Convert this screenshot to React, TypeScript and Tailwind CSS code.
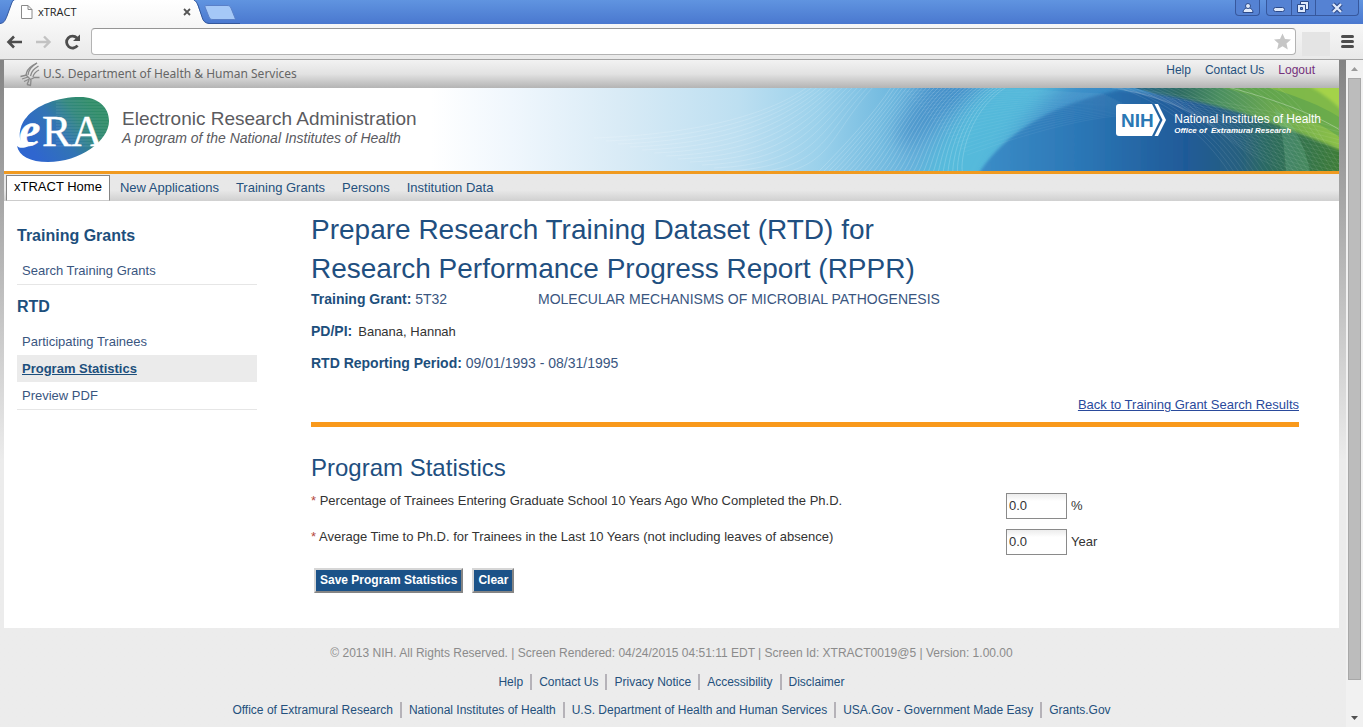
import React from "react";

const range = (n: number) => Array.from({ length: n }, (_, i) => i);

function TabStrip() {
  return (
    <div className="relative flex h-6 shrink-0 bg-linear-to-b from-[#6094e0] to-[#4a78cf]">
      <svg className="absolute left-0 top-0" width="240" height="24" viewBox="0 0 240 24" aria-hidden="true">
        <defs>
          <linearGradient id="tabFill" x1="0" y1="0" x2="0" y2="1">
            <stop offset="0" stopColor="#ffffff" />
            <stop offset="1" stopColor="#f7f7f7" />
          </linearGradient>
        </defs>
        <path d="M0 24 C4 23 5 21 7 16 L11 5 C12 2 13 0 16 0 H193 C195 0 196 1 197 4 L202 17 C203 21 205 23 209 24 Z" fill="url(#tabFill)" />
        <path d="M0 23.500 C4 23 5 21 7 16 L11 5 C12 2 13 0 14 0 M194 0 C196 1 197 3 198 5 L202 17 C203 21 205 23 209 23.500 H240" fill="none" stroke="#34589c" strokeWidth="1" />
        <path d="M207 5.500 H227 C229 5.500 230 6 231 8 L235 18 C235.500 19 235 19.500 234 19.500 H213 C211 19.500 210 19 209 17 L205 7 C204.600 6 205.500 5.500 207 5.500 Z" fill="#a5c8f7" stroke="#5a80c8" />
        <path d="M21.500 5.500 H28 L32 9.500 V18.500 H21.500 Z M28 5.500 V9.500 H32" fill="#fff" stroke="#8a8a8a" />
      </svg>
      <div className="relative flex w-[200px] items-center justify-between pl-[38px] pr-2">
        <span className="font-['Open_Sans','Noto_Sans',sans-serif] text-[11px] text-[#222]">xTRACT</span>
        <button aria-label="Close tab" className="flex size-[10px] items-center justify-center">
          <svg width="8" height="8" viewBox="0 0 8 8" aria-hidden="true">
            <path d="M1 1 L7 7 M7 1 L1 7" stroke="#555" strokeWidth="1.800" />
          </svg>
        </button>
      </div>
      <div className="relative ml-auto mr-1 flex gap-[6px]">
        <button aria-label="User" className="flex h-4 w-[25px] items-center justify-center rounded-b border border-t-0 border-[#37589d] bg-[#5582d3]">
          <svg width="12" height="12" viewBox="0 0 12 12" aria-hidden="true">
            <path d="M1 10.500 C1 8 2.500 6.500 4.500 6 H7.500 C9.500 6.500 11 8 11 10.500 Z" fill="#dfe9fa" stroke="#2c4a8a" />
            <circle cx="6" cy="4" r="2.500" fill="#dfe9fa" stroke="#2c4a8a" />
          </svg>
        </button>
        <div className="flex h-4 w-[93px] divide-x divide-[#37589d] rounded-b border border-t-0 border-[#37589d] bg-[#5582d3]">
          <button aria-label="Minimize" className="flex flex-1 items-end justify-center pb-[3px]">
            <span className="h-[5px] w-3 rounded-sm border border-[#2c4a8a] bg-[#dfe9fa]" />
          </button>
          <button aria-label="Restore" className="flex flex-1 items-center justify-center">
            <svg width="14" height="13" viewBox="0 0 14 13" aria-hidden="true">
              <path d="M4.500 0.500 H12.500 V8.500 H4.500 Z" fill="#dfe9fa" stroke="#2c4a8a" />
              <path d="M1.500 3.500 H9.500 V11.500 H1.500 Z" fill="#dfe9fa" stroke="#2c4a8a" />
              <path d="M4.500 6.500 H6.500 V8.500 H4.500 Z" fill="#5582d3" stroke="#2c4a8a" />
            </svg>
          </button>
          <button aria-label="Close window" className="flex w-[42px] items-center justify-center">
            <svg width="14" height="12" viewBox="0 0 14 12" aria-hidden="true">
              <path d="M3 2 L11 10 M11 2 L3 10" stroke="#2c4a8a" strokeWidth="4.500" />
              <path d="M3 2 L11 10 M11 2 L3 10" stroke="#dfe9fa" strokeWidth="2.400" />
            </svg>
          </button>
        </div>
      </div>
    </div>
  );
}

function Toolbar() {
  return (
    <div className="flex h-9 shrink-0 items-center border-b border-[#a3a3a3] bg-linear-to-b from-[#f7f7f7] to-[#e9e9e9] pl-[6px] pr-[9px]">
      <button aria-label="Back">
        <svg width="18" height="16" viewBox="0 0 18 16" aria-hidden="true">
          <path d="M2.500 8 H16 M8 2.500 L2.500 8 L8 13.500" fill="none" stroke="#4d4d4d" strokeWidth="2.600" />
        </svg>
      </button>
      <button aria-label="Forward" className="ml-3">
        <svg width="18" height="16" viewBox="0 0 18 16" aria-hidden="true">
          <path d="M0 8 H13.500 M8 2.500 L13.500 8 L8 13.500" fill="none" stroke="#c2c2c2" strokeWidth="2.400" />
        </svg>
      </button>
      <button aria-label="Reload" className="ml-2">
        <svg width="20" height="18" viewBox="0 0 20 18" aria-hidden="true">
          <path d="M15.500 12.500 A6 6 0 1 1 15 5" fill="none" stroke="#4d4d4d" strokeWidth="2.800" />
          <path d="M18 1.500 V8 H11 Z" fill="#4d4d4d" />
        </svg>
      </button>
      <label className="ml-[9px] flex h-[27px] flex-1 items-center rounded-sm border border-[#b3b3b3] border-t-[#959595] bg-white pr-1">
        <input aria-label="Address" className="h-full min-w-0 flex-1 bg-transparent px-2 text-sm outline-none" />
        <svg width="17" height="17" viewBox="0 0 17 17" aria-hidden="true">
          <path d="M8.500 0.500 L11 6 L17 6.500 L12.500 10.500 L13.800 16.500 L8.500 13.300 L3.200 16.500 L4.500 10.500 L0 6.500 L6 6 Z" fill="#c6c6c6" />
        </svg>
      </label>
      <div className="ml-[6px] mt-1 h-6 w-7 bg-[#e4e4e4]" />
      <button aria-label="Menu" className="ml-[11px] flex w-[13px] flex-col gap-[2px]">
        <span className="h-[3px] rounded-sm bg-[#4d4d4d]" />
        <span className="h-[3px] rounded-sm bg-[#4d4d4d]" />
        <span className="h-[3px] rounded-sm bg-[#4d4d4d]" />
      </button>
    </div>
  );
}

function AgencyBar() {
  return (
    <div className="flex h-7 justify-between bg-linear-to-b from-[#f2f2f2] via-[#e2e2e2] to-[#b4b4b4] pl-4 pr-6">
      <div className="flex items-center gap-[3px]">
        <svg width="20" height="25" viewBox="0 0 20 25" aria-hidden="true" fill="none" stroke="#8a8a8a" strokeWidth="1.300">
          <path d="M17 1 C11 5 9 7 8 13 M18.500 4 C14 7 11.500 9 10.500 14 M19 8 C15 10 13.500 12 13 15" />
          <path d="M17 1 L12.500 3.500 C8 6.500 6.500 9 6 13 L10.500 17.500 L14.500 15.500 H19.500" />
          <path d="M0.500 14.500 L7 13 M2 17 L8 15 M4 19.500 L9.500 17" />
          <path d="M9 18 L7 22.500 M11 18 L10.500 23.500 M7 22.500 L11 23.500" />
        </svg>
        <span className="font-['Noto_Sans',sans-serif] text-xs text-[#666]">U.S. Department of Health &amp; Human Services</span>
      </div>
      <nav aria-label="Account" className="flex gap-[14px] pt-[2px] text-xs leading-4 text-[#24507c]">
        <a href="#help">Help</a>
        <a href="#contact">Contact Us</a>
        <a href="#logout" className="text-[#74307a]">Logout</a>
      </nav>
    </div>
  );
}

function BannerArt() {
  return (
    <svg className="absolute inset-0 size-full" viewBox="0 0 1335 83" preserveAspectRatio="xMaxYMid slice" aria-hidden="true">
      <defs>
        <linearGradient id="sky" x1="0" x2="1335" y1="0" y2="0" gradientUnits="userSpaceOnUse">
          <stop offset="0.320" stopColor="#ffffff" />
          <stop offset="0.380" stopColor="#f0f7fd" />
          <stop offset="0.460" stopColor="#d9ebf6" />
          <stop offset="0.550" stopColor="#bddff1" />
          <stop offset="0.610" stopColor="#9bd1eb" />
          <stop offset="0.660" stopColor="#74bbe0" />
          <stop offset="0.710" stopColor="#57a5d5" />
          <stop offset="0.820" stopColor="#3a8cc6" />
          <stop offset="1" stopColor="#2c6f9a" />
        </linearGradient>
        <linearGradient id="sea" x1="970" x2="1335" y1="0" y2="0" gradientUnits="userSpaceOnUse">
          <stop offset="0" stopColor="#3c8ec8" />
          <stop offset="0.300" stopColor="#2b76b5" />
          <stop offset="0.580" stopColor="#1f5a98" />
          <stop offset="0.720" stopColor="#275f80" />
          <stop offset="0.820" stopColor="#2d6c5c" />
          <stop offset="1" stopColor="#3d7c38" />
        </linearGradient>
        <linearGradient id="leaf" x1="1070" x2="1335" y1="0" y2="0" gradientUnits="userSpaceOnUse">
          <stop offset="0" stopColor="#3a9cc9" />
          <stop offset="0.220" stopColor="#26688f" />
          <stop offset="0.400" stopColor="#2e6c62" />
          <stop offset="0.550" stopColor="#4b8f60" />
          <stop offset="0.750" stopColor="#6aa850" />
          <stop offset="1" stopColor="#8cc048" />
        </linearGradient>
        <filter id="soft" filterUnits="userSpaceOnUse" x="780" y="-60" width="600" height="220">
          <feGaussianBlur stdDeviation="10" />
        </filter>
        <filter id="edge" x="-10%" y="-10%" width="120%" height="120%">
          <feGaussianBlur stdDeviation="1.500" />
        </filter>
      </defs>
      <rect width="1335" height="83" fill="url(#sky)" />
      <path d="M930 -30 H1010 C970 5 940 30 905 62 C895 60 890 50 895 38 Z" fill="#2f77ba" opacity="0.450" filter="url(#soft)" />
      <path d="M1085 -10 H1345 V93 H1250 C1240 50 1200 10 1085 -10 Z" fill="url(#leaf)" />
      <path d="M1010 -30 H1085 C1040 12 1000 50 975 120 H905 C925 60 965 10 1010 -30 Z" fill="#56c2de" opacity="0.750" filter="url(#soft)" />
      <path d="M970 93 C995 50 1040 18 1115 2 C1190 8 1260 28 1345 66 V93 Z" fill="url(#sea)" filter="url(#edge)" />
      <path d="M1200 -4 H1345 V56 C1310 30 1270 10 1200 -4 Z" fill="#62a64c" opacity="0.750" />
      <path d="M1250 -4 H1345 V36 C1325 20 1290 6 1250 -4 Z" fill="#86bd48" opacity="0.800" />
      <path d="M1300 -4 H1345 V30 C1330 14 1318 4 1300 -4 Z" fill="#a9d64a" opacity="0.900" filter="url(#edge)" />
      <path d="M1270 20 C1276 35 1280 50 1282 83 H1306 C1300 55 1290 35 1270 20 Z" fill="#77c49a" opacity="0.250" />
      <g fill="none" stroke="#ffffff">
        {range(14).map((i) => (
          <path key={i} d={`M${590 + i * 12} ${50 + i * 3} C${700 + i * 10} ${46 + i * 3} ${770 + i * 4} ${24 + i * 2} ${805 + i * 5} -2`} opacity="0.150" />
        ))}
        {range(30).map((i) => (
          <path key={i} d={`M${814 + i * 5} 84 C${840 + i * 4} ${58 + i} ${870 + i * 3} 26 ${888 + i * 4} -2`} opacity="0.180" />
        ))}
        {range(22).map((i) => (
          <path key={i} d={`M${900 + i * 3} ${4 + i * 3} C${980 + i * 3} ${-4 + i * 2} ${1040 + i * 3} ${4 + i} ${1100 + i * 2} ${6 + i}`} opacity="0.050" />
        ))}
        {range(24).map((i) => (
          <path key={i} d={`M${1110 + i * 7} -2 C${1160 + i * 6} ${14} ${1200 + i * 5} 46 ${1225 + i * 5} 84`} opacity="0.090" />
        ))}
        {range(16).map((i) => (
          <path key={i} d={`M${1096 + i * 6} ${-2 + i} C${1170 + i * 3} ${4 + i * 3} 1250 ${18 + i * 4} 1336 ${40 + i * 4}`} opacity="0.080" />
        ))}
        <path d="M1220 -2 C1250 6 1300 20 1336 42" opacity="0.300" />
      </g>
    </svg>
  );
}

function EraLogo() {
  return (
    <svg width="96" height="68" viewBox="0 0 96 68" role="img" aria-label="eRA">
      <defs>
        <linearGradient id="era" x1="0.100" y1="0.700" x2="0.900" y2="0.300">
          <stop offset="0" stopColor="#2f66cf" />
          <stop offset="0.450" stopColor="#3274b4" />
          <stop offset="0.750" stopColor="#31877c" />
          <stop offset="1" stopColor="#2f8c68" />
        </linearGradient>
      </defs>
      <path d="M1 50 C5 54 13 51 18 46 L6 46 C0 38 4 26 10 22 C20 9 42 1 64 1 C82 1 93 11 93 25 C93 45 64 66 32 66 C14 66 3 60 1 50 Z" fill="url(#era)" />
      <g stroke="#ffffff" opacity="0.120">
        {range(16).map((i) => (
          <path key={i} d={`M40 ${5 + i * 3} H92`} />
        ))}
      </g>
      <path d="M0 22 L12 19 C4 28 2 38 5 49 L0 49 Z" fill="#fff" />
      <g fill="#fff" stroke="#fff" fontFamily="'Liberation Serif', serif">
        <text x="3" y="50" fontSize="48" fontWeight="700" fontStyle="italic" strokeWidth="0.500">e</text>
        <text x="26" y="50" fontSize="44" strokeWidth="0.400">RA</text>
      </g>
    </svg>
  );
}

function Banner() {
  return (
    <div className="relative flex h-[86px] items-center justify-between overflow-hidden border-b-[3px] border-[#f09a20] bg-white pl-3 pr-[18px]">
      <BannerArt />
      <div className="relative flex items-center gap-[10px]">
        <EraLogo />
        <div className="pb-1 text-[#5b5b5f]">
          <div className="text-[19px] leading-5">Electronic Research Administration</div>
          <div className="text-[14px] leading-[18px] italic">A program of the National Institutes of Health</div>
        </div>
      </div>
      <div className="relative mb-5 flex items-center gap-1">
        <svg width="54" height="32" viewBox="0 0 54 32" role="img" aria-label="NIH">
          <path d="M3 0 H36 L44 16 L36 32 H3 C1 32 0 31 0 29 V3 C0 1 1 0 3 0 Z" fill="#fff" />
          <path d="M38.500 0 H42 L50 16 L42 32 H38.500 L46.500 16 Z" fill="#fff" />
          <text x="5" y="23" fontFamily="'Liberation Sans', sans-serif" fontSize="19" fontWeight="700" fill="#2a78b4">NIH</text>
        </svg>
        <div className="pt-2 text-white">
          <div className="text-[12px] leading-[14px]">National Institutes of Health</div>
          <div className="text-[8px] leading-[10px] font-bold italic">Office of&nbsp; Extramural Research</div>
        </div>
      </div>
    </div>
  );
}

function MainNav() {
  return (
    <nav aria-label="Main" className="flex h-[27px] items-stretch bg-linear-to-b from-[#e8e8e8] from-60% to-[#d0d0d0] pl-[2px] pt-px text-[13px] text-[#24507c]">
      <a href="#home" className="mr-[10px] flex items-center border border-[#858585] border-b-[#ccc] bg-white px-[7px] pb-[2px] text-black">xTRACT Home</a>
      <div className="flex items-center gap-[17px]">
        <a href="#applications">New Applications</a>
        <a href="#grants">Training Grants</a>
        <a href="#persons">Persons</a>
        <a href="#institution">Institution Data</a>
      </div>
    </nav>
  );
}

function Sidebar() {
  return (
    <aside className="w-60 shrink-0 pt-[25px] text-[13px] text-[#3a567f]">
      <h2 className="text-base leading-5 font-bold text-[#1d4f7c]">Training Grants</h2>
      <div className="mt-[11px] border-b border-[#e6e6e6] px-[5px] leading-[27px]">
        <a href="#search">Search Training Grants</a>
      </div>
      <h2 className="mt-3 text-base leading-5 font-bold text-[#1d4f7c]">RTD</h2>
      <ul className="mt-[11px] border-b border-[#e6e6e6] leading-[27px]">
        <li className="px-[5px]"><a href="#trainees">Participating Trainees</a></li>
        <li className="bg-[#ebebeb] px-[5px]"><a href="#statistics" className="font-bold text-[#1d4f7c] underline">Program Statistics</a></li>
        <li className="px-[5px]"><a href="#preview">Preview PDF</a></li>
      </ul>
    </aside>
  );
}

function StatField({ id, label, unit }: { id: string; label: string; unit: string }) {
  return (
    <div className="grid grid-cols-[1fr_293px]">
      <label htmlFor={id} className="leading-4"><span className="text-[#b5493c]">*</span> {label}</label>
      <div className="flex items-center gap-1">
        <input id={id} defaultValue="0.0" className="h-[26px] w-[61px] border border-[#8a8a8a] bg-linear-to-b from-[#ececec] to-white to-30% px-[2px] pb-[2px]" />
        <span>{unit}</span>
      </div>
    </div>
  );
}

const buttonStyle = "border-2 border-[#d6d6d6] border-r-[#858585] border-b-[#858585] bg-[#1b5288] px-1 text-xs leading-[21px] font-bold text-white";

function Content() {
  return (
    <main className="min-w-0 flex-1 pt-[9px] pb-[35px] text-[13px] text-[#333]">
      <h1 className="text-[28px] leading-[39px] text-[#1f4f80]">
        Prepare Research Training Dataset (RTD) for
        <br />
        Research Performance Progress Report (RPPR)
      </h1>
      <div className="mt-px flex flex-col gap-3 leading-5 text-[#3a567f]">
        <div className="flex text-[14px]">
          <div className="w-[227px]"><b className="text-[#1d4f7c]">Training Grant:</b> 5T32</div>
          <div>MOLECULAR MECHANISMS OF MICROBIAL PATHOGENESIS</div>
        </div>
        <div className="flex h-5 items-baseline gap-[6px]"><b className="text-[14px] text-[#1d4f7c]">PD/PI:</b><span className="text-[#333]">Banana, Hannah</span></div>
        <div className="text-[14px]"><b className="text-[#1d4f7c]">RTD Reporting Period:</b> 09/01/1993 - 08/31/1995</div>
      </div>
      <div className="mt-[22px] border-b-[5px] border-[#f9991b] pb-[7px] text-right leading-5">
        <a href="#results" className="text-[#2a4a9c] underline">Back to Training Grant Search Results</a>
      </div>
      <form onSubmit={(e) => e.preventDefault()}>
        <h2 className="mt-[26px] text-2xl leading-[30px] text-[#1f4f80]">Program Statistics</h2>
        <div className="mt-[10px] flex flex-col gap-[10px]">
          <StatField id="completed" label="Percentage of Trainees Entering Graduate School 10 Years Ago Who Completed the Ph.D." unit="%" />
          <StatField id="average" label="Average Time to Ph.D. for Trainees in the Last 10 Years (not including leaves of absence)" unit="Year" />
        </div>
        <div className="mt-[13px] flex gap-[9px] pl-[3px]">
          <button type="submit" className={buttonStyle}>Save Program Statistics</button>
          <button type="reset" className={buttonStyle}>Clear</button>
        </div>
      </form>
    </main>
  );
}

function LinkRow({ label, links }: { label: string; links: string[] }) {
  return (
    <nav aria-label={label} className="mt-3 flex justify-center divide-x-2 divide-[#b5b2b8] text-[#24507c]">
      {links.map((text) => (
        <a key={text} href="#footer" className="px-[7px] leading-4">{text}</a>
      ))}
    </nav>
  );
}

function Footer() {
  return (
    <footer className="pt-[17px] text-xs">
      <p className="text-center leading-[17px] text-[#8b8b8b]">© 2013 NIH. All Rights Reserved. | Screen Rendered: 04/24/2015 04:51:11 EDT | Screen Id: XTRACT0019@5 | Version: 1.00.00</p>
      <LinkRow label="Help links" links={["Help", "Contact Us", "Privacy Notice", "Accessibility", "Disclaimer"]} />
      <LinkRow label="Agency links" links={["Office of Extramural Research", "National Institutes of Health", "U.S. Department of Health and Human Services", "USA.Gov - Government Made Easy", "Grants.Gov"]} />
    </footer>
  );
}

function ScrollBar() {
  return (
    <div aria-hidden="true" className="flex w-[17px] shrink-0 flex-col items-center bg-[#f1f1f1]">
      <svg className="my-[7px] shrink-0" width="7" height="4" viewBox="0 0 7 4"><path d="M0 4 L3.500 0 L7 4 Z" fill="#9a9a9a" /></svg>
      <div className="w-[13px] flex-1 border border-[#a8a8a8] bg-[#bcbcbc]" />
      <svg className="mt-9 mb-[7px] shrink-0" width="7" height="4" viewBox="0 0 7 4"><path d="M0 0 L3.500 4 L7 0 Z" fill="#505050" /></svg>
    </div>
  );
}

export default function App() {
  return (
    <div className="flex h-screen flex-col overflow-hidden font-['Liberation_Sans',Arial,sans-serif]">
      <TabStrip />
      <Toolbar />
      <div className="flex min-h-0 flex-1">
        <div className="min-w-0 flex-1 overflow-hidden bg-linear-to-b from-[#838383] to-[#ececec] to-60% pl-1 pr-[7px]">
          <AgencyBar />
          <Banner />
          <MainNav />
          <div className="flex gap-[54px] bg-white pl-[13px] pr-10">
            <Sidebar />
            <Content />
          </div>
          <Footer />
        </div>
        <ScrollBar />
      </div>
    </div>
  );
}
